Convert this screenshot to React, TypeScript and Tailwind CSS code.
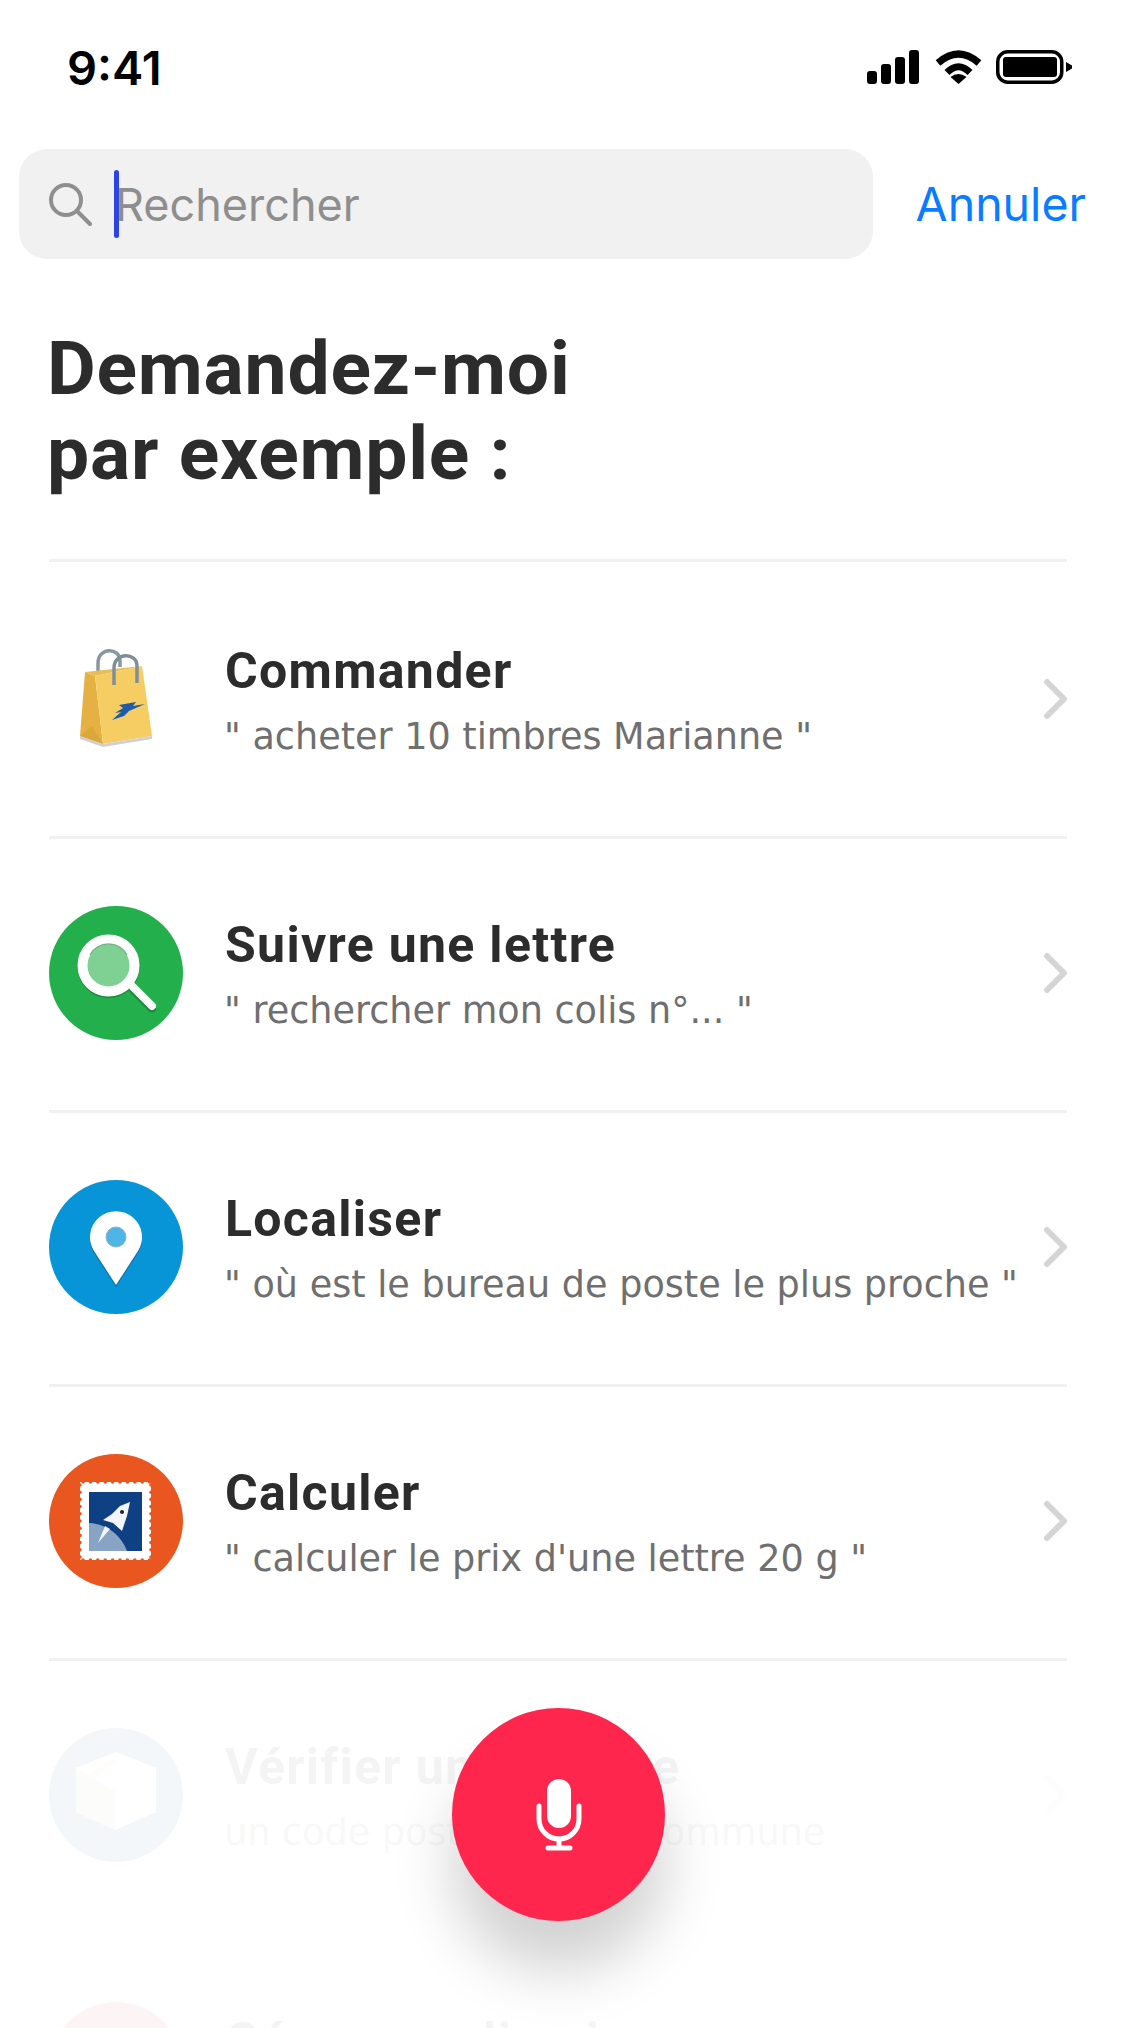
import React from "react";

const din = "font-['Roboto',sans-serif]";

function Chevron() {
  return (
    <svg width="28" height="42" viewBox="0 0 28 42" className="shrink-0" fill="none">
      <path d="M8 4l17 17L8 38" stroke="#d5d5d5" strokeWidth="6" strokeLinecap="round" strokeLinejoin="round" />
    </svg>
  );
}

function BagIcon() {
  return (
    <svg width="134" height="134" viewBox="0 0 134 134">
      <path d="M49 43V31c0-16 22-16 22-2v6" fill="none" stroke="#8a979f" strokeWidth="3.5" />
      <path d="M31 104l5-64 10 4 8 68z" fill="#e5b142" />
      <path d="M36 40l57-6-47 10z" fill="#e9bd52" />
      <path d="M46 44l47-10 10 70-49 8z" fill="#f5cd63" />
      <path d="M31 104l12-10 11 18z" fill="#dca73a" />
      <path d="M31 104l23 8 49-8v3l-49 8-23-8z" fill="#cfd0d2" />
      <path d="M65 53V36c0-16 23-16 23-2v17" fill="none" stroke="#7e8f99" strokeWidth="3.5" />
      <path d="M70 73l17-3-3 4 12-2-16 7-5 5-12 4 9-8-6 1 8-5z" fill="#1f5ca8" />
    </svg>
  );
}

function SearchCircle() {
  return (
    <svg width="134" height="134" viewBox="0 0 134 134">
      <circle cx="67" cy="67" r="67" fill="#23b04c" />
      <path d="M84 83l19 19" stroke="#198a3b" strokeWidth="9" strokeLinecap="round" />
      <circle cx="59.5" cy="61" r="26" fill="none" stroke="#1a8a3c" strokeWidth="10" />
      <path d="M84 81l19 19" stroke="#fff" strokeWidth="8" strokeLinecap="round" />
      <circle cx="59.5" cy="59.5" r="26" fill="#7fd093" stroke="#fff" strokeWidth="10" />
      <path d="M41 49a21 21 0 0 1 37 0" fill="none" stroke="#6fb585" strokeWidth="1.5" />
    </svg>
  );
}

function PinCircle() {
  return (
    <svg width="134" height="134" viewBox="0 0 134 134">
      <circle cx="67" cy="67" r="67" fill="#0795d8" />
      <path d="M67 107L45 73a26 26 0 1 1 44 0z" fill="#0a6fa4" />
      <path d="M67 105L45 71a26 26 0 1 1 44 0z" fill="#fff" />
      <circle cx="67" cy="57" r="10" fill="#4fb5e6" stroke="#8cb4c9" strokeWidth="1" />
    </svg>
  );
}

function StampCircle() {
  const top = Array.from({ length: 10 }, (_, i) => 34 + i * 7.4);
  const side = Array.from({ length: 11 }, (_, i) => 31 + i * 7.2);
  return (
    <svg width="134" height="134" viewBox="0 0 134 134">
      <circle cx="67" cy="67" r="67" fill="#ea5620" />
      <rect x="31" y="28" width="71" height="78" fill="#fff" />
      {top.map((x) => (
        <React.Fragment key={x}>
          <circle cx={x} cy="28" r="1.8" fill="#ea5620" />
          <circle cx={x} cy="106" r="1.8" fill="#ea5620" />
        </React.Fragment>
      ))}
      {side.map((y) => (
        <React.Fragment key={y}>
          <circle cx="31" cy={y} r="1.8" fill="#ea5620" />
          <circle cx="102" cy={y} r="1.8" fill="#ea5620" />
        </React.Fragment>
      ))}
      <rect x="40" y="38" width="53" height="59" fill="#0e4083" />
      <path d="M40 69c18 1 32 12 38 28H40z" fill="#88a4c4" />
      <path d="M81 48l-10 4-8 8-9 6 10 3 9 8 5-15z" fill="#f4f5f8" />
      <path d="M61 75L49 89l7-17z" fill="#f4f5f8" />
      <circle cx="73" cy="58" r="2" fill="#123" />
    </svg>
  );
}

function BoxCircle() {
  return (
    <svg width="134" height="134" viewBox="0 0 134 134">
      <circle cx="67" cy="67" r="67" fill="#235f9b" />
      <path d="M67 24l40 16v44l-41 18-39-18V40z" fill="#ffffff" />
      <path d="M27 40l39 23v39L27 84z" fill="#c8b8a0" />
      <path d="M36 48l28-18 5 3-28 20z" fill="#e8d080" />
    </svg>
  );
}

const rows: { icon: React.ReactNode; title: React.ReactNode; sub: string }[] = [
  { icon: <BagIcon />, title: "Commander", sub: "\" acheter 10 timbres Marianne \"" },
  { icon: <SearchCircle />, title: "Suivre une lettre", sub: "\" rechercher mon colis n°... \"" },
  { icon: <PinCircle />, title: "Localiser", sub: "\" où est le bureau de poste le plus proche \"" },
  { icon: <StampCircle />, title: "Calculer", sub: "\" calculer le prix d'une lettre 20 g \"" },
  {
    icon: <BoxCircle />,
    title: (
      <>
        Vérifier un<span className="tracking-[-1.6px]">e adress</span>e
      </>
    ),
    sub: "un code postal ou une commune",
  },
  { icon: <div className="h-[134px] w-[134px] rounded-full bg-[#d73737]" />, title: "Gérer mes livraisons", sub: "" },
];

export default function App() {
  return (
    <div className="relative h-[2028px] w-[1140px] overflow-hidden bg-white">
      <div className="flex h-[149px] items-start justify-between pl-[67px] pr-[68px] pt-[42px]">
        <span className="font-['Inter',sans-serif] text-[47px] font-semibold leading-[52px] text-black">9:41</span>
        <div className="flex items-center pt-[8px]">
          <svg width="52" height="34" viewBox="0 0 52 34" fill="#000">
            <rect x="0" y="21" width="10" height="13" rx="3" />
            <rect x="14" y="14" width="10" height="20" rx="3" />
            <rect x="28" y="7" width="10" height="27" rx="3" />
            <rect x="42" y="0" width="10" height="34" rx="3" />
          </svg>
          <svg className="ml-[16px]" width="47" height="34" viewBox="0 0 47 34" fill="none" stroke="#000" strokeWidth="7">
            <path d="M3 13Q23.5 -5 44 13" />
            <path d="M12 22.5Q23.5 11 35 22.5" />
            <path d="M23.5 34L15.5 27Q23.5 21 31.5 27z" fill="#000" stroke="none" />
          </svg>
          <svg className="ml-[14px]" width="76" height="34" viewBox="0 0 76 34">
            <rect x="1.75" y="1.75" width="64" height="30.5" rx="10" fill="none" stroke="#000" strokeWidth="3.5" />
            <rect x="7" y="7" width="54" height="20" rx="3" fill="#000" />
            <path d="M70 12l6 3.5v3L70 22z" fill="#000" />
          </svg>
        </div>
      </div>

      <div className="flex items-center pl-[19px] pr-[54px]">
        <div className="flex h-[110px] w-[854px] items-center rounded-[28px] bg-[#f1f1f1] pl-[29px]">
          <svg width="44" height="44" viewBox="0 0 44 44" fill="none" stroke="#8f8f8f" strokeWidth="4" strokeLinecap="round">
            <circle cx="18" cy="18" r="15" />
            <path d="M29 29l13 13" />
          </svg>
          <div className="ml-[22px] h-[68px] w-[5px] rounded-full bg-[#2d43e8]" />
          <span className="-ml-[4px] font-['Inter',sans-serif] text-[45px] leading-none text-[#8e8e8e]">Rechercher</span>
        </div>
        <span className="ml-auto font-['Inter',sans-serif] text-[46.5px] leading-none text-[#0a7cff]">Annuler</span>
      </div>

      <h1 className={`${din} ml-[47px] mt-[67px] text-[75px] font-bold leading-[85px] tracking-[0.8px] text-[#2c2c2c]`}>
        Demandez-moi<br />par exemple :
      </h1>

      <div className="mx-[49px] mt-[63px] w-[1018px]">
        {rows.map((r, i) => (
          <div
            key={i}
            className={
              i === 0
                ? "flex h-[277px] items-center border-t-[3px] border-[#f1f1f1]"
                : "flex h-[274px] items-center border-t-[3px] border-[#f1f1f1] pb-[4px]"
            }
          >
            <div className="h-[134px] w-[134px] shrink-0">{r.icon}</div>
            <div className="ml-[42px] min-w-0 flex-1 pt-[5px]">
              <div className={`${din} text-[50px] font-bold leading-[60px] tracking-[1.3px] text-[#2c2c2c]`}>{r.title}</div>
              <div className="-ml-[1px] mt-[11px] h-[50px] whitespace-nowrap font-['DejaVu_Sans',sans-serif] text-[36.6px] leading-[50px] text-[#6f6f6f]">{r.sub}</div>
            </div>
            <Chevron />
          </div>
        ))}
      </div>

      <div className="absolute inset-x-0 top-[1664px] bottom-0 bg-white/95" />

      <button className="absolute left-[452px] top-[1708px] flex h-[213px] w-[213px] items-center justify-center rounded-full bg-[#ff264d] shadow-[0_50px_60px_rgba(0,0,0,0.18)]">
        <svg width="46" height="72" viewBox="0 0 46 72" fill="none">
          <rect x="11" y="0" width="24" height="49" rx="12" fill="#fff" />
          <path d="M3 27v13c0 11 9 20 20 20s20-9 20-20V27" stroke="#fff" strokeWidth="5" strokeLinecap="round" />
          <path d="M23 60v9M12 69h22" stroke="#fff" strokeWidth="5" strokeLinecap="round" />
        </svg>
      </button>
    </div>
  );
}
